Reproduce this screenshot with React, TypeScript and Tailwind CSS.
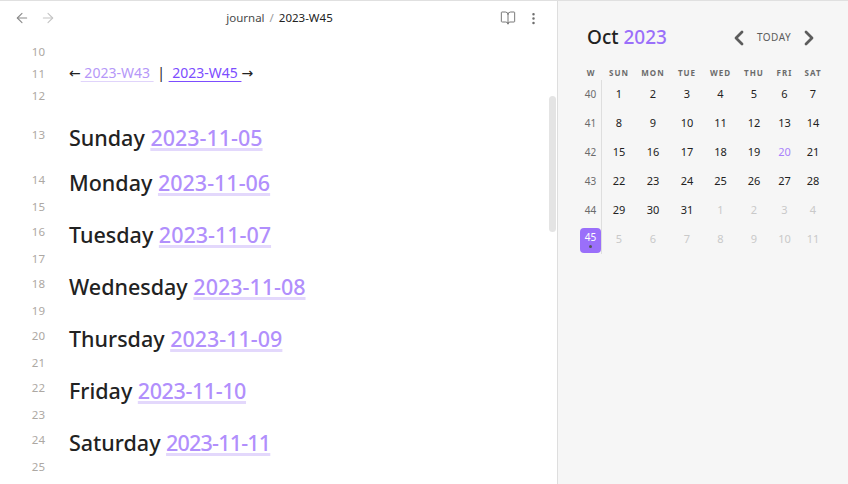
import React from 'react';
import { ArrowLeft, ArrowRight, BookOpen, ChevronLeft, ChevronRight, MoreVertical } from 'lucide-react';

const days = [
  { day: 'Sunday', date: '2023-11-05', num: '13', cls: 'h-[53px] pt-[16px]', track: '' },
  { day: 'Monday', date: '2023-11-06', num: '14', cls: 'h-[36px] pt-[8px]', track: '' },
  { day: 'Tuesday', date: '2023-11-07', num: '16', cls: 'h-[30px] pt-[2px]', track: '' },
  { day: 'Wednesday', date: '2023-11-08', num: '18', cls: 'h-[30px] pt-[2px]', track: '' },
  { day: 'Thursday', date: '2023-11-09', num: '20', cls: 'h-[30px] pt-[2px]', track: '' },
  { day: 'Friday', date: '2023-11-10', num: '22', cls: 'h-[30px] pt-[2px]', track: 'tracking-[-0.4px]' },
  { day: 'Saturday', date: '2023-11-11', num: '24', cls: 'h-[30px] pt-[2px]', track: 'tracking-[-0.8px]' },
];

const headers = ['W', 'SUN', 'MON', 'TUE', 'WED', 'THU', 'FRI', 'SAT'];

const weeks = [
  { w: '40', cells: ['1', '2', '3', '4', '5', '6', '7'] },
  { w: '41', cells: ['8', '9', '10', '11', '12', '13', '14'] },
  { w: '42', cells: ['15', '16', '17', '18', '19', '20', '21'] },
  { w: '43', cells: ['22', '23', '24', '25', '26', '27', '28'] },
  { w: '44', cells: ['29', '30', '31', '1', '2', '3', '4'] },
  { w: '45', cells: ['5', '6', '7', '8', '9', '10', '11'] },
];

const EmptyLine = ({ num }: { num: string }) => (
  <div className="flex h-[22px] items-center">
    <div className="w-[45px] text-right text-[11.5px] text-[#ada8a3]">{num}</div>
  </div>
);

const App = () => {
  return (
    <div className="flex h-[484px] w-[848px] overflow-hidden border-t border-[#e0e0e0] bg-white font-['Noto_Sans','Open_Sans',sans-serif]">
      {/* Editor */}
      <main className="relative h-full w-[558px] shrink-0 border-r border-[#dedede]">
        <header className="flex h-[40px] items-center justify-between pr-[16px] pb-[6px] pl-[14px]">
          <div className="flex items-center gap-[10px]">
            <ArrowLeft size={16} strokeWidth={1.6} className="text-[#8a8a8a]" />
            <ArrowRight size={16} strokeWidth={1.6} className="text-[#c4c4c4]" />
          </div>
          <div className="ml-[3px] flex items-center text-[11.5px] text-[#4a4a4a]">
            <span>journal</span>
            <span className="mx-[5px] text-[#9a9a9a]">/</span>
            <span className="text-[#222222]">2023-W45</span>
          </div>
          <div className="flex items-center gap-[10px]">
            <BookOpen size={16} strokeWidth={1.4} className="text-[#6e6e6e]" />
            <MoreVertical size={15} strokeWidth={2} className="text-[#6e6e6e]" />
          </div>
        </header>

        <EmptyLine num="10" />
        <div className="flex h-[22px] items-center">
          <div className="w-[45px] text-right text-[11.5px] text-[#ada8a3]">11</div>
          <div className="ml-[24px] whitespace-pre pb-[2px] text-[14px] text-[#222222]">
            <span className="font-['DejaVu_Sans',sans-serif]">←</span>
            <span className="text-[#b597f8] underline decoration-[#e0d4fb] decoration-1 underline-offset-[3px]"> 2023-W43 </span>
            {' | '}
            <span className="text-[#7c4dff] underline decoration-[#7c4dff] decoration-1 underline-offset-[3px]"> 2023-W45 </span>
            <span className="font-['DejaVu_Sans',sans-serif]">→</span>
          </div>
        </div>
        <EmptyLine num="12" />

        {days.map((d, i) => (
          <div key={d.num}>
            <div className={`flex ${d.cls}`}>
              <div className="w-[45px] pt-[2px] text-right text-[11.5px] leading-[20px] text-[#ada8a3]">{d.num}</div>
              <div className="ml-[24px] whitespace-pre text-[21.5px] leading-[30px] font-medium text-[#222222]">
                {d.day}{' '}
                <span className={`text-[#b18ffc] underline decoration-[#e3d8fc] decoration-[2.5px] underline-offset-[2px] ${d.track}`}>{d.date}</span>
              </div>
            </div>
            {i > 0 && <EmptyLine num={String(Number(d.num) + 1)} />}
          </div>
        ))}

        {/* scrollbar */}
        <div className="absolute top-[95px] right-[1px] h-[136px] w-[7px] rounded-[4px] bg-[#e4e4e4]" />
      </main>

      {/* Calendar */}
      <aside className="h-full flex-1 bg-[#f6f6f6] pl-[22px]">
        <div className="flex h-[63px] items-center pt-[10px]">
          <div className="pl-[7px] text-[19px] font-medium text-[#222222]">
            Oct <span className="text-[#9a6ffa]">2023</span>
          </div>
          <div className="ml-[60px] flex items-center">
            <ChevronLeft size={24} strokeWidth={2.8} className="text-[#5c5c5c]" />
            <span className="mr-[6px] ml-[6px] text-[10px] tracking-[0.5px] text-[#5c5c5c]">TODAY</span>
            <ChevronRight size={24} strokeWidth={2.8} className="text-[#5c5c5c]" />
          </div>
        </div>
        <div className="grid grid-cols-[22px_34px_34px_34px_33px_34px_27px_30px]">
          {headers.map(h => (
            <div key={h} className="flex h-[16px] items-center justify-center pt-[1px] text-[8px] font-bold tracking-[1px] text-[#6b6b6b]">
              {h}
            </div>
          ))}
          {weeks.map((row, r) => (
            <React.Fragment key={row.w}>
              <div className="flex h-[29px] items-center justify-center border-r border-[#dedede]">
                {row.w === '45' ? (
                  <div className="mt-[2px] flex h-[25px] w-[21px] flex-col items-center rounded-[4px] bg-[#9a6ffa] pt-[2px] text-[10px] leading-[15px] text-white">
                    45
                    <div className="h-[3px] w-[3px] rounded-full bg-[#555555]" />
                  </div>
                ) : (
                  <span className="text-[10px] text-[#6b6b6b]">{row.w}</span>
                )}
              </div>
              {row.cells.map((c, i) => {
                const faded = r === 5 || (r === 4 && i > 2);
                const today = r === 2 && i === 5;
                return (
                  <div
                    key={i}
                    className={`flex h-[29px] items-center justify-center text-[11px] ${
                      today ? 'text-[#a982fb]' : faded ? 'text-[#c9c9c9]' : 'text-[#222222]'
                    }`}
                  >
                    {c}
                  </div>
                );
              })}
            </React.Fragment>
          ))}
        </div>
      </aside>
    </div>
  );
};

export default App;
